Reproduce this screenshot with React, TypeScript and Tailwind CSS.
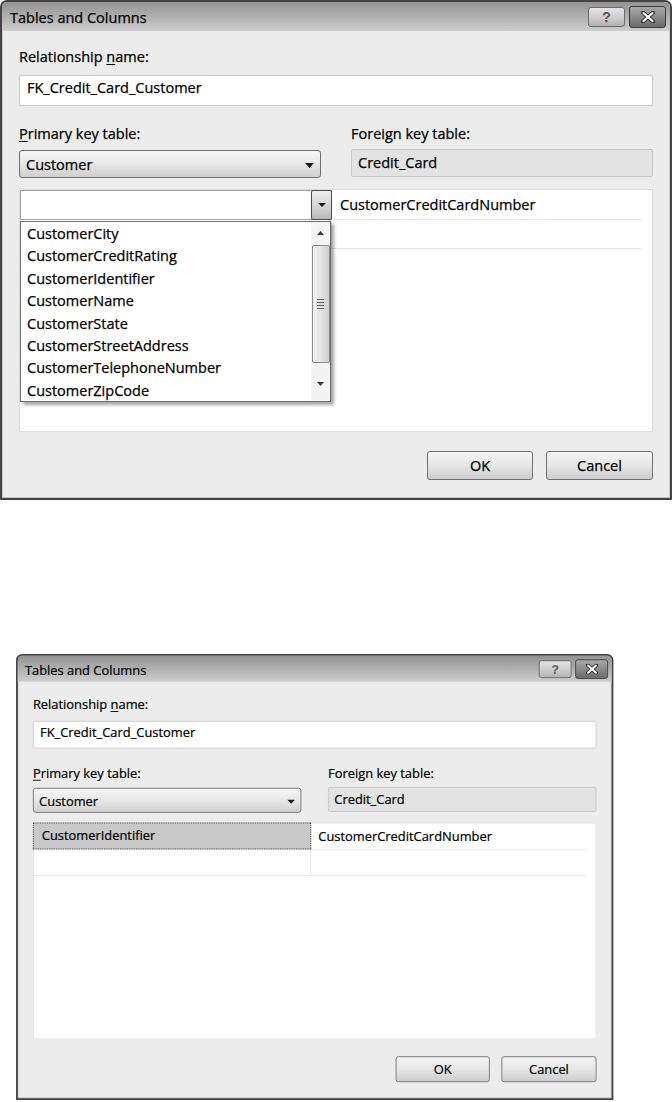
const columns = [
  'CustomerCity',
  'CustomerCreditRating',
  'CustomerIdentifier',
  'CustomerName',
  'CustomerState',
  'CustomerStreetAddress',
  'CustomerTelephoneNumber',
  'CustomerZipCode',
]

function DownArrow({ w = 9, h = 5, color = '#1a1a1a' }: { w?: number; h?: number; color?: string }) {
  return (
    <svg width={w} height={h} viewBox={`0 0 ${w} ${h}`}>
      <path d={`M0 0H${w}L${w / 2} ${h}Z`} fill={color} />
    </svg>
  )
}

function UpArrow({ w = 8, h = 4, color = '#3a3a3a' }: { w?: number; h?: number; color?: string }) {
  return (
    <svg width={w} height={h} viewBox={`0 0 ${w} ${h}`}>
      <path d={`M0 ${h}H${w}L${w / 2} 0Z`} fill={color} />
    </svg>
  )
}

function CaptionButtons() {
  return (
    <div className="flex items-center gap-[4px] pt-[1px]">
      {/* Help */}
      <div className="flex h-[20px] w-[37px] items-center justify-center rounded-[3px] border border-[#6a6a6a] bg-linear-to-b from-[#e4e4e4] via-[#cfcfcf] to-[#b2b2b2]">
        <span className="font-['Liberation_Sans',sans-serif] text-[14px] leading-none font-bold text-[#6b6b6b] [text-shadow:0_0_1px_#fff,0_0_1px_#fff]">
          ?
        </span>
      </div>
      {/* Close */}
      <div className="flex h-[22px] w-[37px] items-center justify-center rounded-[3px] border border-[#383838] bg-linear-to-b from-[#a9a9a9] via-[#8a8a8a] to-[#6a6a6a]">
        <svg width="14" height="12" viewBox="0 0 14 12">
          <path d="M2 1.5L12 10.5M12 1.5L2 10.5" stroke="#2e2e2e" strokeWidth="4" strokeLinecap="round" />
          <path d="M2.5 2L11.5 10M11.5 2L2.5 10" stroke="#ffffff" strokeWidth="2.2" strokeLinecap="round" />
        </svg>
      </div>
    </div>
  )
}

function DropdownList() {
  return (
    <div className="absolute top-[31px] left-0 z-10 flex h-[181px] w-[311px] border border-[#6e6e6e] bg-white shadow-[3px_3px_3px_rgba(0,0,0,0.35)]">
      <div className="flex-1 pt-[1px]">
        {columns.map((c) => (
          <div key={c} className="h-[22.4px] pl-[6px] text-[14.5px] leading-[22.4px]">
            {c}
          </div>
        ))}
      </div>
      {/* Scrollbar */}
      <div className="flex w-[19px] flex-col items-center bg-[#f4f4f4]">
        <div className="flex h-[22px] items-center">
          <UpArrow w={7} h={4} />
        </div>
        <div className="mt-[1px] flex h-[118px] w-[18px] items-center justify-center rounded-[2px] border border-[#8c8c8c] bg-linear-to-r from-[#f2f2f2] via-[#e2e2e2] to-[#cfcfcf]">
          <div className="flex flex-col gap-[2px]">
            <div className="h-px w-[7px] bg-[#5a5a5a]" />
            <div className="h-px w-[7px] bg-[#5a5a5a]" />
            <div className="h-px w-[7px] bg-[#5a5a5a]" />
            <div className="h-px w-[7px] bg-[#5a5a5a]" />
          </div>
        </div>
        <div className="flex flex-1 items-center pt-[4px]">
          <DownArrow w={7} h={4} color="#3a3a3a" />
        </div>
      </div>
    </div>
  )
}

function Dialog({ open }: { open: boolean }) {
  return (
    <div className="flex h-[500px] w-[672px] flex-col rounded-t-[7px] border-2 border-[#444444] bg-[#c6c6c6] font-['Open_Sans',sans-serif] text-black [-webkit-text-stroke:0.25px_#000]">
      {/* Title bar */}
      <div className="flex h-[29px] shrink-0 items-center justify-between rounded-t-[5px] bg-linear-to-b from-[#939393] to-[#cdcdcd] pr-[4px] pl-[8px]">
        <span className="pt-[2px] text-[14.5px] leading-[20px]">Tables and Columns</span>
        <CaptionButtons />
      </div>

      {/* Body */}
      <div className="mx-px mb-px flex flex-1 flex-col bg-[#ececec] px-[16px] pt-[16px] text-[14.5px]">
        <div className="leading-[20px]">
          Relationship <span className="underline underline-offset-[2px]">n</span>ame:
        </div>
        <div className="mt-[8px] h-[31px] rounded-[2px] border border-[#c9c9c9] bg-white pt-[2px] pl-[7px] leading-[20px]">
          FK_Credit_Card_Customer
        </div>

        <div className="mt-[18px] grid grid-cols-2 gap-x-[30px]">
          <div className="leading-[20px]">
            <span className="underline underline-offset-[2px]">P</span>rimary key table:
          </div>
          <div className="leading-[20px]">Foreign key table:</div>
          <div className="mt-[6px] flex h-[28px] items-center justify-between rounded-[3px] border border-[#6f6f6f] bg-linear-to-b from-[#f6f6f6] via-[#e7e7e7] to-[#cfcfcf] pt-[1px] pr-[6px] pl-[6px] leading-[20px]">
            <span>Customer</span>
            <span className="pt-[1px]">
              <DownArrow />
            </span>
          </div>
          <div className="mt-[5px] h-[28px] rounded-[2px] border border-[#c6c6c6] bg-[#e3e3e3] pt-[3px] pl-[6px] leading-[20px]">
            Credit_Card
          </div>
        </div>

        {/* Columns grid */}
        <div className="mt-[11px] h-[243px] border border-[#dcdcdc] bg-white pr-[11px]">
          <div className="relative flex h-[30px] border-b border-[#e4e4e4]">
            {open ? (
              <div className="flex h-[30px] w-[312px] border border-[#a2a2a2] bg-white">
                <div className="flex-1" />
                <div className="-my-px -mr-px flex w-[21px] items-center justify-center rounded-[2px] border border-[#4a4a4a] bg-linear-to-b from-[#ececec] via-[#d8d8d8] to-[#b9b9b9]">
                  <DownArrow w={8} h={4} />
                </div>
              </div>
            ) : (
              <div className="-mt-px -ml-px w-[313px] border border-dotted border-[#3a3a3a] bg-[#c9c9c9] pt-[4px] pl-[9px] leading-[20px]">
                CustomerIdentifier
              </div>
            )}
            <div className="flex-1 pt-[5px] pl-[8px] leading-[20px]">CustomerCreditCardNumber</div>
            {open && <DropdownList />}
          </div>
          <div className="flex h-[29px] border-b border-[#e4e4e4]">
            <div className="w-[312px] border-r border-[#e4e4e4]" />
            <div className="flex-1" />
          </div>
        </div>

        {/* Buttons */}
        <div className="mt-[19px] flex justify-end gap-[13px]">
          <div className="flex h-[29px] w-[106px] items-center justify-center rounded-[3px] border border-[#707070] bg-linear-to-b from-[#f4f4f4] via-[#e6e6e6] to-[#cdcdcd] leading-[20px]">
            OK
          </div>
          <div className="flex h-[29px] w-[107px] items-center justify-center rounded-[3px] border border-[#707070] bg-linear-to-b from-[#f4f4f4] via-[#e6e6e6] to-[#cdcdcd] leading-[20px]">
            Cancel
          </div>
        </div>
      </div>
    </div>
  )
}

export default function App() {
  return (
    <div className="min-h-[1102px] w-[672px] bg-white">
      <Dialog open />
      <div className="mt-[154px] ml-[16px] h-[446px] w-[597px]">
        <div className="origin-top-left scale-x-[0.889] scale-y-[0.892]">
          <Dialog open={false} />
        </div>
      </div>
    </div>
  )
}
